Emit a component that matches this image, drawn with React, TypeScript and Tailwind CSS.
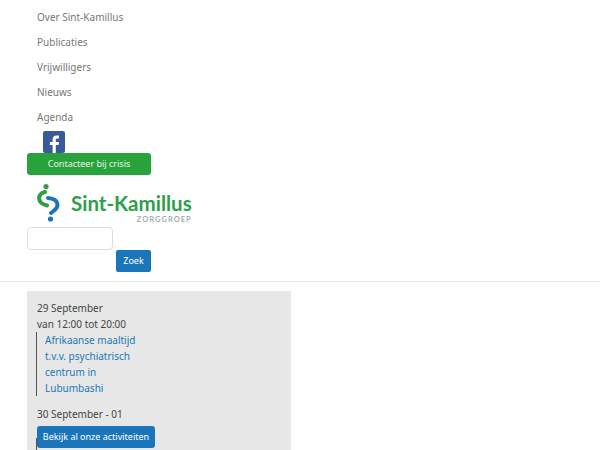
const navItems = ["Over Sint-Kamillus", "Publicaties", "Vrijwilligers", "Nieuws", "Agenda"];

function Logo() {
  return (
    <div className="flex h-[39px] items-center pl-[10px]">
      <svg width="24" height="39" viewBox="0 0 24 39" className="shrink-0">
        <circle cx="9" cy="3.5" r="2.6" fill="#2e9e4a" />
        <path d="M8 9 C3.5 10 1.8 13 2.2 16 C2.6 19.5 6 21.5 10 22.5" fill="none" stroke="#2e9e4a" strokeWidth="4" strokeLinecap="round" />
        <path d="M11 15 C17 15.5 20.5 18 20.5 22 C20.5 26 17 27.5 14 30" fill="none" stroke="#1b75bb" strokeWidth="4" strokeLinecap="round" />
        <circle cx="13.5" cy="36" r="2.6" fill="#1b75bb" />
      </svg>
      <div className="ml-[10px] flex flex-col items-end pt-[10px]">
        <span className="font-['Lato',sans-serif] text-[20.5px] leading-[22px] font-bold text-[#2e9e4a]">Sint-Kamillus</span>
        <span className="mt-[2px] font-['Lato',sans-serif] text-[7.5px] leading-[8px] font-bold tracking-[1px] text-[#a4acb4]">ZORGGROEP</span>
      </div>
    </div>
  );
}

export default function App() {
  return (
    <div className="relative h-[450px] overflow-hidden bg-white font-['Noto_Sans',sans-serif] text-[10px] leading-[16px] text-[#444]">
      <div className="px-[27px] pt-[4px]">
        {/* Menu */}
        <ul>
          {navItems.map((item) => (
            <li key={item} className="flex h-[25px] items-center pl-[10px] text-[#777]">{item}</li>
          ))}
        </ul>

        {/* Facebook */}
        <div className="mt-[2px] ml-[16px] flex h-[22px] w-[22px] items-end justify-center overflow-hidden rounded-[2px] bg-[#3b5998]">
          <svg width="12" height="19" viewBox="0 0 12 19">
            <path d="M7.8 19 V11 H10.6 L11 7.9 H7.8 V6 C7.8 5 8.1 4.4 9.4 4.4 H11 V1.6 C10.6 1.5 9.7 1.4 8.6 1.4 C6.2 1.4 4.6 2.9 4.6 5.6 V7.9 H1.9 V11 H4.6 V19 Z" fill="#fff" />
          </svg>
        </div>

        {/* Crisis */}
        <button className="flex h-[22px] w-[124px] items-center justify-center rounded-[3px] bg-[#28a33c] text-[9px] text-[#e8f5ea]">Contacteer bij crisis</button>

        <div className="mt-[8px]"><Logo /></div>

        {/* Zoeken */}
        <input className="mt-[5px] block h-[23px] w-[86px] rounded-[4px] border border-[#ddd] bg-white" />
        <div className="flex w-[124px] justify-end">
          <button className="flex h-[22px] w-[35px] items-center justify-center rounded-[2px] bg-[#1b75bb] text-[9px] text-white">Zoek</button>
        </div>
      </div>

      <hr className="mt-[9px] border-[#e5e5e5]" />

      {/* Agenda */}
      <div className="mx-[27px] mt-[9px] w-[264px] bg-[#e7e7e7] px-[10px] pt-[9px] pb-[40px]">
        <div className="w-[100px]">
          <p>29 September</p>
          <p className="whitespace-nowrap">van 12:00 tot 20:00</p>
          <div className="-ml-[1px] border-l border-[#555] pl-[8px] text-[#2079b4]">
            Afrikaanse maaltijd t.v.v. psychiatrisch centrum in Lubumbashi
          </div>
          <p className="mt-[10px] whitespace-nowrap">30 September - 01</p>
          <p>oktober</p>
          <div className="-ml-[1px] h-[32px] border-l border-[#555]" />
        </div>
      </div>

      <button className="absolute top-[426px] left-[37px] flex h-[22px] w-[118px] items-center justify-center rounded-[3px] bg-[#1b75bb] text-[9px] whitespace-nowrap text-white">
        Bekijk al onze activiteiten
      </button>
    </div>
  );
}
